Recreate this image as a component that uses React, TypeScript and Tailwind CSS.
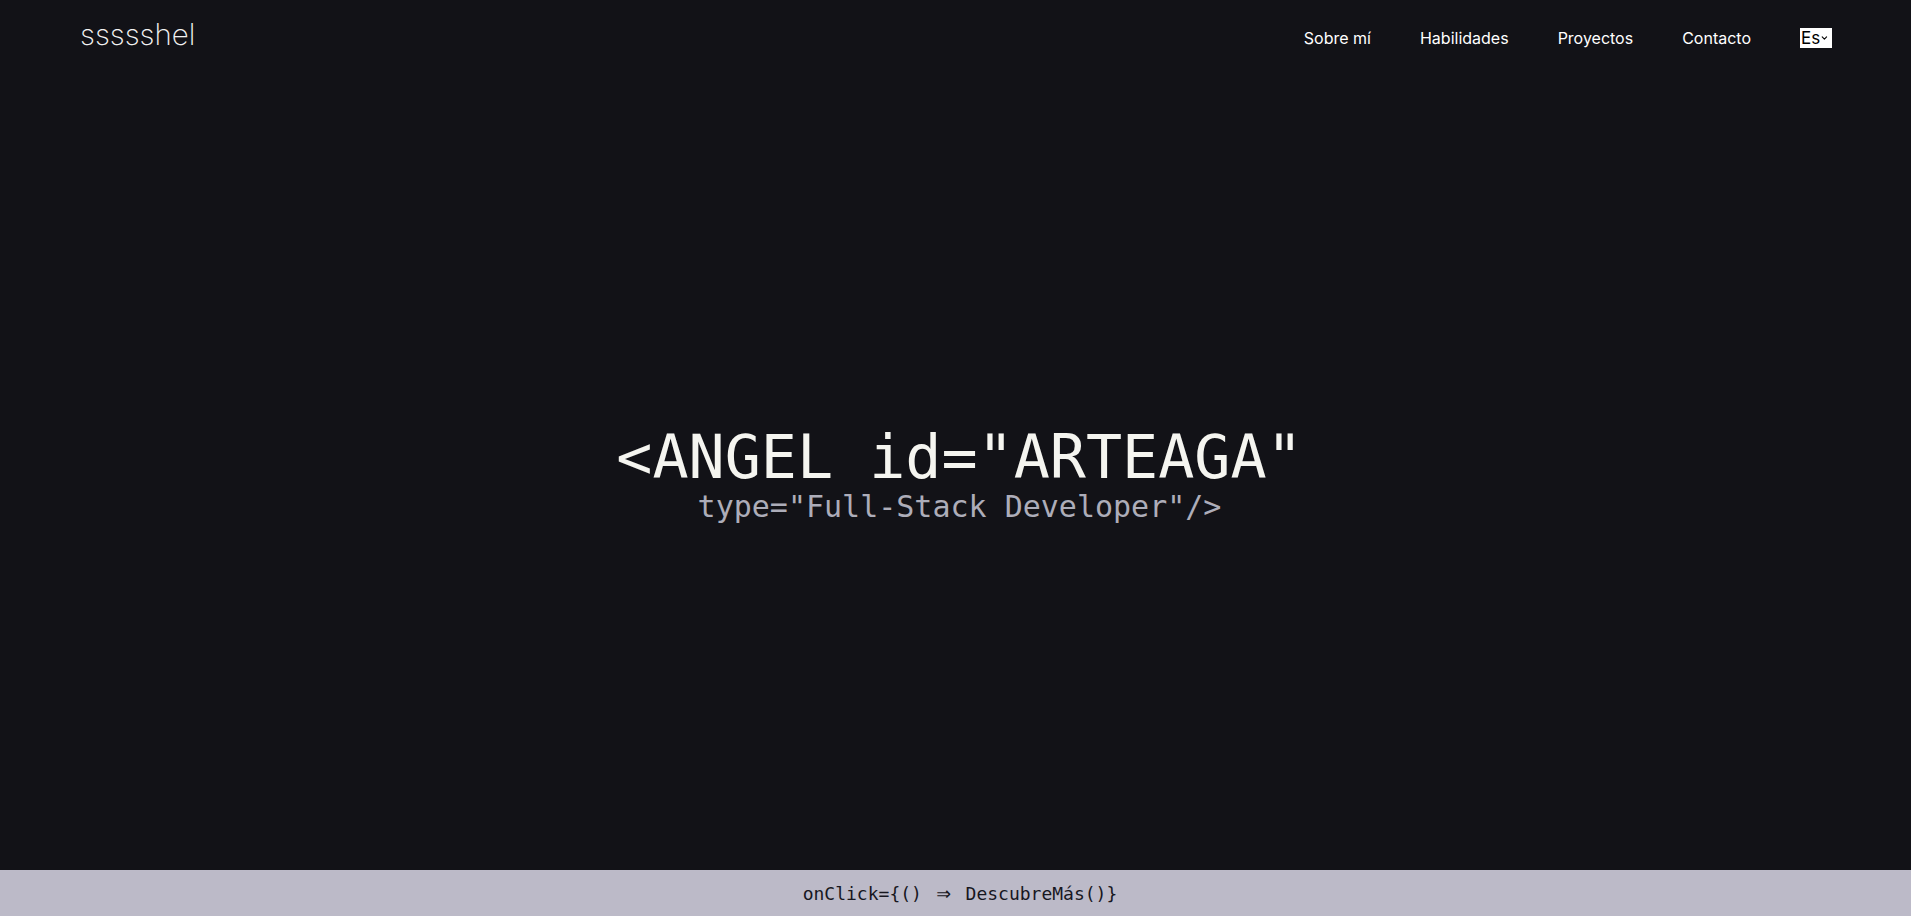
import { ChevronDown } from 'lucide-react';

export default function App() {
  const links = ["Sobre mí", "Habilidades", "Proyectos", "Contacto"];

  return (
    <div className="h-screen w-full flex flex-col bg-[#121217] text-white overflow-hidden">
      {/* Header */}
      <header className="h-[77px] flex items-start justify-between pl-[80px] pr-[79px] font-['Inter',sans-serif]">
        <a className="mt-[16px] text-[29.5px] leading-[36px] font-extralight text-[#f2f2f2]">ssssshel</a>
        <nav className="mt-[26px] flex items-center gap-[49px] text-[16px] leading-[24px]">
          {links.map((l) => (
            <a key={l} className="text-white">{l}</a>
          ))}
          <div className="flex items-center justify-between w-[32px] h-[20px] bg-white text-black pl-[1px] pr-[3px] text-[17px] leading-[20px]">
            <span>Es</span>
            <ChevronDown className="w-[10px] h-[10px]" strokeWidth={3} />
          </div>
        </nav>
      </header>

      {/* Hero */}
      <main className="flex-1 flex flex-col items-center justify-center pl-[8px] font-['DejaVu_Sans_Mono',monospace]">
        <h1 className="mt-[2px] text-[60px] leading-[60px] text-[#f5f5f0]">&lt;ANGEL id="ARTEAGA"</h1>
        <p className="mt-[5px] text-[30px] leading-[30px] text-[#adadb9]">type="Full-Stack Developer"/&gt;</p>
      </main>

      {/* Footer */}
      <footer className="h-[46px] bg-[#bcbac8] flex items-center justify-center pl-[9px] font-['DejaVu_Sans_Mono',monospace] text-[18px] text-[#17171f] whitespace-pre">
        <span>{"onClick={() "}</span>
        <span className="inline-flex justify-center w-[22px] text-[24px] leading-none">⇒</span>
        <span>{" DescubreMás()}"}</span>
      </footer>
    </div>
  );
}
